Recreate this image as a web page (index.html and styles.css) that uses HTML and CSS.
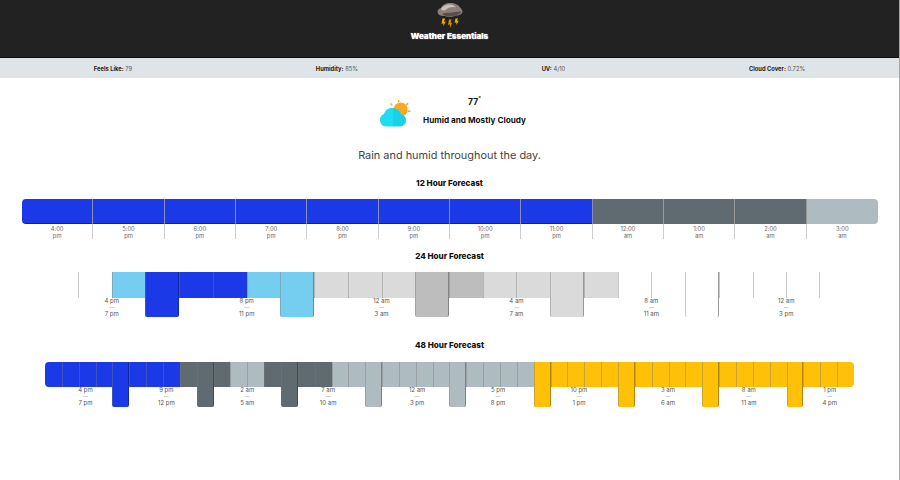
FILE: index.html
```html
<!DOCTYPE html>
<html lang="en">
<head>
<meta charset="utf-8">
<title>Weather Essentials</title>
<link rel="stylesheet" href="styles.css">
</head>
<body>
<div class="page">
<header class="top">
  <svg class="storm" width="28" height="25" viewBox="0 0 28 25">
    <path d="M1.500 9C1.500 7 3 5.500 5 5C6 2 10 0 14 0C19 0 23 2 24.500 5C26 6 26.800 8 26.300 9.500C25.500 12 22 12.500 19 12.500C16 14.500 12 14.500 9 13C5 13.500 1.800 12 1.500 9Z" fill="#8b7f7a"/>
    <path d="M5 6C7 2.500 11 1 15 1.500C17.500 2 19 3 20 4.500C16 3.500 12 4.500 9.500 7C8 8 6 7.500 5 6Z" fill="#c9c0b9"/>
    <path d="M6 11C10 9 13 10 16 9.500C19 9 22 8.500 25 8.500C24.500 11 21.500 12 19 12C16 14 12 14 9 12.500C8 12.500 7 12 6 11Z" fill="#574d4a"/>
    <path d="M6.500 15.500L5.500 21L7.300 20.300L7.500 23L9.700 18.500L8 19L9 15.500Z" fill="#f2ae00"/>
    <path d="M13 16.500L12 22L13.800 21.300L14 25L16.200 19.500L14.500 20L15.500 16.500Z" fill="#d98f00"/>
    <path d="M19.500 15.500L18.500 20L20.300 19.300L20.500 22L22.700 17.500L21 18L22 15.500Z" fill="#f2ae00"/>
  </svg>
  <h1 class="brand">Weather Essentials</h1>
</header>
<section class="stats">
  <span><b>Feels Like:</b> 79</span>
  <span><b>Humidity:</b> 85%</span>
  <span><b>UV:</b> 4/10</span>
  <span><b>Cloud Cover:</b> 0.72%</span>
</section>
<section class="hero">
  <svg class="partly" width="31" height="27" viewBox="0 0 31 27">
    <circle cx="20.600" cy="9.500" r="7" fill="#ffa726"/>
    <path d="M18.600 0V2.200M10.500 3.500L12.200 5.200M28 3L26.300 5.200M27.800 11.300H30.500" stroke="#ffa726" stroke-width="1.500" fill="none"/>
    <path d="M6.500 26.500A6.500 6.500 0 0 1 3.800 14.100A8.500 8.500 0 0 1 13 8V26.500Z" fill="#1fdcf0"/>
    <path d="M13 8A8 8 0 0 1 21 14.200A6.200 6.200 0 0 1 20 26.500H13Z" fill="#19d2ea"/>
  </svg>
  <div class="now">
    <div class="temp">77<sup>°</sup></div>
    <div class="cond">Humid and Mostly Cloudy</div>
  </div>
</section>
<p class="summary">Rain and humid throughout the day.</p>

<section class="fc fc12">
  <h2>12 Hour Forecast</h2>
  <div class="hours">
    <div class="hr"><div class="seg blue"></div><div class="hl">4:00<br>pm</div></div>
    <div class="hr"><div class="seg blue"></div><div class="hl">5:00<br>pm</div></div>
    <div class="hr"><div class="seg blue"></div><div class="hl">6:00<br>pm</div></div>
    <div class="hr"><div class="seg blue"></div><div class="hl">7:00<br>pm</div></div>
    <div class="hr"><div class="seg blue"></div><div class="hl">8:00<br>pm</div></div>
    <div class="hr"><div class="seg blue"></div><div class="hl">9:00<br>pm</div></div>
    <div class="hr"><div class="seg blue"></div><div class="hl">10:00<br>pm</div></div>
    <div class="hr"><div class="seg blue"></div><div class="hl">11:00<br>pm</div></div>
    <div class="hr"><div class="seg slate"></div><div class="hl">12:00<br>am</div></div>
    <div class="hr"><div class="seg slate"></div><div class="hl">1:00<br>am</div></div>
    <div class="hr"><div class="seg slate"></div><div class="hl">2:00<br>am</div></div>
    <div class="hr"><div class="seg mist"></div><div class="hl">3:00<br>am</div></div>
  </div>
</section>

<section class="fc fc24">
  <h2>24 Hour Forecast</h2>
  <div class="strip s24">
    <i class="c"></i><i class="c sky"></i><i class="c blue tall"></i><i class="c blue"></i><i class="c blue"></i><i class="c sky"></i><i class="c sky tall"></i><i class="c fog"></i><i class="c fog"></i><i class="c fog"></i><i class="c ash tall"></i>
    <i class="c ash"></i><i class="c fog"></i><i class="c fog"></i><i class="c fog tall"></i><i class="c fog"></i><i class="c"></i><i class="c"></i><i class="c tall"></i><i class="c"></i><i class="c"></i><i class="c end"></i>
    <div class="lbl" style="left:4.55%">4 pm<br><em>—</em><br>7 pm</div>
    <div class="lbl" style="left:22.73%">8 pm<br><em>—</em><br>11 pm</div>
    <div class="lbl" style="left:40.91%">12 am<br><em>—</em><br>3 am</div>
    <div class="lbl" style="left:59.09%">4 am<br><em>—</em><br>7 am</div>
    <div class="lbl" style="left:77.27%">8 am<br><em>—</em><br>11 am</div>
    <div class="lbl" style="left:95.45%">12 am<br><em>—</em><br>3 pm</div>
  </div>
</section>

<section class="fc fc48">
  <h2>48 Hour Forecast</h2>
  <div class="strip s48">
    <i class="c blue first"></i><i class="c blue"></i><i class="c blue"></i><i class="c blue"></i><i class="c blue tall"></i><i class="c blue"></i><i class="c blue"></i><i class="c blue"></i>
    <i class="c slate"></i><i class="c slate tall"></i><i class="c slate"></i>
    <i class="c mist"></i><i class="c mist"></i>
    <i class="c slate"></i><i class="c slate tall"></i><i class="c slate"></i><i class="c slate"></i>
    <i class="c mist"></i><i class="c mist"></i><i class="c mist tall"></i><i class="c mist"></i><i class="c mist"></i><i class="c mist"></i><i class="c mist"></i><i class="c mist tall"></i><i class="c mist"></i><i class="c mist"></i><i class="c mist"></i><i class="c mist"></i>
    <i class="c gold tall"></i><i class="c gold"></i><i class="c gold"></i><i class="c gold"></i><i class="c gold"></i><i class="c gold tall"></i><i class="c gold"></i><i class="c gold"></i><i class="c gold"></i><i class="c gold"></i><i class="c gold tall"></i><i class="c gold"></i><i class="c gold"></i><i class="c gold"></i><i class="c gold"></i><i class="c gold tall"></i><i class="c gold"></i><i class="c gold"></i><i class="c gold last"></i>
    <div class="lbl" style="left:5%">4 pm<br><em>—</em><br>7 pm</div>
    <div class="lbl" style="left:15%">9 pm<br><em>—</em><br>12 pm</div>
    <div class="lbl" style="left:25%">2 am<br><em>—</em><br>5 am</div>
    <div class="lbl" style="left:35%">7 am<br><em>—</em><br>10 am</div>
    <div class="lbl" style="left:46%">12 am<br><em>—</em><br>3 pm</div>
    <div class="lbl" style="left:56%">5 pm<br><em>—</em><br>8 pm</div>
    <div class="lbl" style="left:66%">10 pm<br><em>—</em><br>1 pm</div>
    <div class="lbl" style="left:77%">3 am<br><em>—</em><br>6 am</div>
    <div class="lbl" style="left:87%">8 am<br><em>—</em><br>11 am</div>
    <div class="lbl" style="left:97%">1 pm<br><em>—</em><br>4 pm</div>
  </div>
</section>
</div>
</body>
</html>
```
FILE: styles.css
```css
* { box-sizing: border-box; }
html, body { margin: 0; padding: 0; }
body { background: #fff; font-family: Inter, "Liberation Sans", sans-serif; color: #111; }
.page { width: 900px; height: 480px; border-right: 1px solid #a8a8a8; overflow: hidden; }

.top { height: 58px; background: #222; border-bottom: 1px solid #0e0e0e; display: flex; flex-direction: column; align-items: center; padding-top: 3px; }
.storm { display: block; }
.brand { margin: 2px 0 0; font-size: 8.100px; line-height: 12px; font-weight: 800; color: #fff; text-shadow: 0 0 1px #fff; }

.stats { height: 20px; background: #dfe4e8; display: flex; justify-content: space-around; align-items: center; font-size: 5.800px; color: #555; padding: 0 2px; }
.stats b { color: #222; font-weight: 700; }

.hero { margin-top: 18px; height: 30px; display: flex; justify-content: center; align-items: center; gap: 12px; padding-left: 7px; }
.partly { display: block; margin-top: 5px; }
.now { display: flex; flex-direction: column; align-items: center; gap: 6px; }
.temp { font-size: 8.500px; line-height: 12px; font-weight: 700; }
.temp sup { font-size: 6px; line-height: 0; font-weight: 400; }
.cond { font-size: 8.200px; line-height: 12px; font-weight: 700; }

.summary { margin: 22px 0 0; text-align: center; font-size: 10.900px; line-height: 14px; color: #444; }

.fc h2 { margin: 0; text-align: center; font-size: 8.100px; line-height: 10px; font-weight: 800; color: #111; }
.fc12 { margin-top: 16px; }
.fc24 { margin-top: 12px; }
.fc48 { margin-top: 23px; }

.hours { margin: 11px 21px 0 22px; display: grid; grid-template-columns: repeat(12, 1fr); height: 40px; }
.hr:first-child .seg { border-radius: 4px 0 0 4px; }
.hr:last-child .seg { border-radius: 0 4px 4px 0; border-right: 0; }
.hr:last-child .hl { border-right: 0; }
.seg { height: 25px; border-right: 1px solid rgba(170, 170, 170, .75); }
.seg.blue { box-shadow: inset 0 -1px rgba(0, 0, 200, .6); }
.hl { height: 15px; border-right: 1px solid #ccc; padding-top: 1px; text-align: center; font-size: 5.800px; line-height: 7px; color: #666; }

.strip { position: relative; display: grid; align-items: start; height: 45px; margin-top: 11px; }
.s24 { grid-template-columns: repeat(22, 1fr); width: 742px; margin-left: 78px; }
.s48 { grid-template-columns: repeat(48, 1fr); width: 809px; margin-left: 45px; margin-top: 11.500px; }
.s48 .lbl { top: 25px; }

.c { display: block; height: 25.500px; border-left: 1px solid rgba(120, 120, 120, .4); }
.s24 .c:not(.blue):not(.sky):not(.fog):not(.ash) { border-left-color: #c8c8c8; }
.tall { height: 45px; border-radius: 0 0 2px 2px; border-right: 1px solid rgba(0, 0, 0, .3); }
.s24 .c.tall:not(.blue):not(.sky):not(.fog):not(.ash) { border-right-color: #999; }
.s24 .end { border-right: 1px solid #c8c8c8; border-left: 1px solid #c8c8c8; }
.first { border-radius: 4px 0 0 4px; border-left: 0; }
.last { border-radius: 0 4px 4px 0; }

.blue { background: #1c39e8; }
.slate { background: #5f6b70; }
.mist { background: #aebbc1; }
.sky { background: #75cef0; }
.fog { background: #dadada; }
.ash { background: #bdbdbd; }
.gold { background: #ffc107; }

.lbl { position: absolute; top: 25.600px; transform: translateX(-50%); text-align: center; white-space: nowrap; font-size: 6px; line-height: 6.800px; color: #555; }
.lbl em { font-style: normal; font-size: 5px; color: #999; }
```
